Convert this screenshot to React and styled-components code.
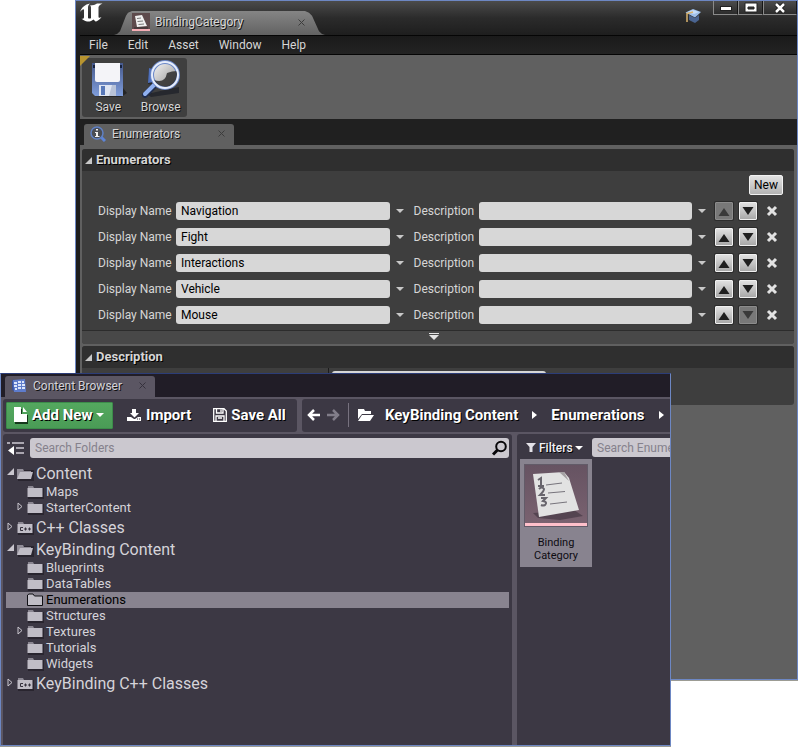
import React from 'react';
import styled, { createGlobalStyle, css } from 'styled-components';

const GlobalStyle = createGlobalStyle`
  *, *::before, *::after { box-sizing: border-box; }
  body {
    margin: 0;
    background: #ffffff;
    font-family: Roboto, "Liberation Sans", sans-serif;
    font-size: 12px;
    line-height: 16px;
  }
  button, input { font: inherit; color: inherit; }
  button { border: 0; padding: 0; background: none; }
  a { color: inherit; text-decoration: none; }
  svg { display: block; flex: none; }
  ul { list-style: none; margin: 0; padding: 0; }
  h2 { margin: 0; font-size: 13px; }
`;

const Desktop = styled.div`
  position: relative;
  min-height: 100vh;
  overflow: hidden;
`;

/* ---------- Editor window ---------- */

const EditorWindow = styled.section`
  display: flex;
  flex-direction: column;
  margin-left: 75px;
  min-height: calc(100vh - 67px);
  border: 1px solid #6d87c3;
  box-shadow: 0 1px 0 #9c9c94;
  padding-left: 4px;
  background: #1d1d1d;
  color: #d6d6d6;
`;

const TitleBar = styled.header`
  display: flex;
  align-items: flex-end;
  height: 34px;
  margin-left: -4px;
  padding-left: 4px;
  background: linear-gradient(#4b4b4b, #2b2b2b 50%, #1e1e1e);
`;

const LogoSlot = styled.div`
  align-self: flex-start;
  width: 34px;
  padding-top: 2px;
`;

const DocumentTab = styled.div`
  display: flex;
  align-items: center;
  gap: 5px;
  width: 211px;
  height: 24px;
  padding: 0 17px 2px 18px;
  background: linear-gradient(#858585, #626262);
  clip-path: polygon(
    0 100%, 3px 96%, 6px 84%, 12px 20%, 14px 7%, 18px 0,
    calc(100% - 20px) 0, calc(100% - 16px) 7%, calc(100% - 13px) 20%,
    calc(100% - 6px) 84%, calc(100% - 3px) 96%, 100% 100%
  );
  text-shadow: 1px 1px 0 #111111;
`;

const CloseButton = styled.button`
  display: flex;
  align-items: center;
  justify-content: center;
  width: 14px;
  height: 14px;
  margin-left: auto;
  color: ${(p) => p.$color || '#3c3c3c'};
`;

const TutorialButton = styled.button`
  align-self: flex-start;
  margin: 7px 11px 0 auto;
`;

const WindowControls = styled.div`
  display: flex;
  align-self: flex-start;
`;

const WindowButton = styled.button`
  display: flex;
  align-items: center;
  justify-content: center;
  width: ${(p) => (p.$wide ? 34 : 25)}px;
  height: 14px;
  border: 1px solid #8a8a8a;
  border-top: 0;
  border-right-color: #161616;
  background: linear-gradient(#4c4c4c, #2c2c2c);
`;

const MenuBar = styled.nav`
  display: flex;
  align-items: center;
  gap: 20px;
  height: 20px;
  padding-left: 9px;
  border: solid #050505;
  border-width: 1px 0;
  background: linear-gradient(#1a1a1a, #232323);
`;

const EditorBody = styled.div`
  display: flex;
  flex: 1;
  flex-direction: column;
  background: #606060;
`;

const EditorToolbar = styled.div`
  position: relative;
  padding: 3px 2px 2px;
  &::before {
    content: "";
    position: absolute;
    top: 1px;
    left: 0;
    width: 10px;
    height: 10px;
    background: #b8942f;
    clip-path: polygon(0 0, 100% 0, 0 100%);
  }
`;

const ToolGroup = styled.div`
  display: inline-flex;
  width: 105px;
  height: 59px;
  border-radius: 3px;
  background: #3f3f3f;
  vertical-align: top;
`;

const ToolButton = styled.button`
  display: flex;
  flex: 1;
  flex-direction: column;
  align-items: center;
  gap: 1px;
  padding-top: 2px;
  text-shadow: 1px 1px 0 #111111;
`;

const TabStrip = styled.div`
  display: flex;
  align-items: flex-end;
  height: ${(p) => (p.$purple ? 23 : 26)}px;
  padding-left: 4px;
  background: ${(p) => (p.$purple ? '#211d27' : '#202020')};
`;

const PanelTab = styled.div`
  display: flex;
  align-items: center;
  gap: 6px;
  width: 150px;
  height: 21px;
  padding: 0 6px 2px;
  border-radius: 3px 3px 0 0;
  background: ${(p) => (p.$purple ? '#5b5663' : '#606060')};
  text-shadow: 1px 1px 0 #111111;
`;

const Details = styled.div`
  display: flex;
  flex-direction: column;
  gap: 2px;
  padding: 4px 3px 0 2px;
`;

const Category = styled.section`
  overflow: hidden;
  border-radius: 3px;
  background: #3e3e3e;
`;

const CategoryHeader = styled.div`
  display: flex;
  align-items: center;
  gap: 4px;
  height: 22px;
  padding-left: 3px;
  background: #2f2f2f;
  text-shadow: 1px 1px 0 #000000;
`;

const CategoryTools = styled.div`
  display: flex;
  justify-content: flex-end;
  padding: 4px 11px 3px;
`;

const NewButton = styled.button`
  height: 20px;
  padding: 0 4px;
  border: 1px solid #f2f2f2;
  border-radius: 2px;
  background: linear-gradient(#e2e2e2, #b4b4b4);
  color: #000000;
`;

const EnumRow = styled.div`
  display: flex;
  align-items: center;
  height: 26px;
  padding: 0 16px;
`;

const Field = styled.label`
  display: flex;
  flex: 1 1 ${(p) => p.$basis}px;
  align-items: center;
  gap: 4px;
  min-width: 0;
  white-space: nowrap;
`;

const FieldName = styled.span`
  flex: none;
  width: ${(p) => p.$width}px;
`;

const TextBox = styled.input`
  flex: 1 1 0;
  min-width: 0;
  width: 100%;
  height: 18px;
  padding: 0 5px;
  border: 0;
  border-radius: 3px;
  background: #d7d7d7;
  color: #000000;
`;

const OptionsButton = styled.button`
  display: flex;
  justify-content: center;
  width: 20px;
  margin-right: ${(p) => (p.$last ? 3 : 4)}px;
`;

const MoveButton = styled.button`
  display: flex;
  align-items: center;
  justify-content: center;
  width: 18px;
  height: 18px;
  margin-right: 6px;
  border: 1px solid #efefef;
  border-radius: 1px;
  box-shadow: 0 0 0 1px #2c2c2c;
  background: linear-gradient(#e0e0e0, #a9a9a9);
  color: #1f1f1f;
  &:disabled {
    border-color: #8c8c8c;
    background: #787878;
    color: #3a3a3a;
  }
`;

const RemoveButton = styled.button`
  display: flex;
  width: 12px;
  margin-left: 3px;
`;

const AdvancedToggle = styled.button`
  display: flex;
  justify-content: center;
  width: 100%;
  height: 14px;
  margin-top: 2px;
  padding: 2px 8px 0 0;
  border-top: 1px solid #2c2c2c;
  background: #484848;
`;

const DescriptionRow = styled.div`
  display: grid;
  grid-template-columns: 247px 214px;
  gap: 3px;
  height: 37px;
  &::before {
    content: "";
    border-right: 1px solid #1c1c1c;
  }
`;

const DescriptionCell = styled.div`
  padding-top: 3px;
`;

/* ---------- Content browser window ---------- */

const BrowserWindow = styled.section`
  position: absolute;
  top: 373px;
  right: 127px;
  bottom: 1px;
  left: 0;
  display: flex;
  flex-direction: column;
  overflow: hidden;
  border: 1px solid #6d87c3;
  border-top-color: #2c3d78;
  box-shadow: 0 1px 0 #9c9c94;
  background: #5b5663;
  color: #d5d3d9;
`;

const BrowserToolbar = styled.div`
  display: flex;
  gap: 5px;
  padding: 2px 0 2px 2px;
  color: #ffffff;
  font-size: 15px;
  font-weight: 700;
  text-shadow: 1px 1px 0 #000000;
`;

const BarGroup = styled.div`
  display: flex;
  align-items: center;
  height: 33px;
  padding-bottom: 1px;
  border-radius: 3px;
  background: #3c3844;
  white-space: nowrap;
  ${(p) =>
    p.$grow
      ? css`
          flex: 1;
          padding-left: 5px;
          overflow: hidden;
          border-radius: 3px 0 0 3px;
        `
      : css`
          flex: none;
          width: 294px;
          padding-left: 3px;
        `}
`;

const BarButton = styled.button`
  display: flex;
  align-items: center;
  gap: 4px;
  margin-left: ${(p) => p.$gap || 0}px;
  text-shadow: inherit;
`;

const AddButton = styled(BarButton)`
  width: 107px;
  height: 27px;
  padding-left: 7px;
  border: 1px solid #3c8c4a;
  border-radius: 1px;
  background: linear-gradient(#54a85f, #4a9c56);
`;

const Separator = styled.span`
  width: 1px;
  height: 24px;
  margin: 0 9px 0 8px;
  background: #77727f;
`;

const Crumbs = styled.nav`
  display: flex;
  align-items: center;
  gap: 14px;
  margin-left: 10px;
`;

const Panels = styled.div`
  display: flex;
  flex: 1;
  gap: 5px;
  min-height: 0;
  padding-left: 2px;
`;

const SourcesPanel = styled.div`
  flex: 1;
  min-width: 0;
  padding: 4px 3px 0;
  border-radius: 3px 3px 0 0;
  background: #3c3844;
`;

const AssetPanel = styled.div`
  flex: none;
  width: 153px;
  padding: 4px 0 0 3px;
  border-radius: 3px 0 0 0;
  background: #3c3844;
`;

const SearchRow = styled.div`
  display: flex;
  align-items: center;
  gap: 5px;
  margin-bottom: ${(p) => p.$space || 0}px;
`;

const SearchBox = styled.div`
  display: flex;
  flex: 1;
  align-items: center;
  min-width: 0;
  height: ${(p) => p.$height}px;
  border-radius: 3px;
  background: #cbc8cf;
  ${(p) => p.$flush && 'border-radius: 3px 0 0 3px;'}
`;

const SearchInput = styled.input`
  flex: 1;
  min-width: 0;
  padding: 0 0 0 5px;
  border: 0;
  background: none;
  color: #222222;
  outline: 0;
  &::placeholder { color: #85818c; opacity: 1; }
`;

const SquareButton = styled.button`
  display: flex;
  justify-content: center;
  width: 19px;
`;

const TreeItem = styled.li`
  display: flex;
  align-items: center;
  height: ${(p) => (p.$root ? 22 : 16)}px;
  padding-left: ${(p) => (p.$root ? 0 : 10)}px;
  ${(p) => p.$root && 'padding-top: 2px;'}
  ${(p) => p.$selected && 'background: #88838f;'}
  color: ${(p) => (p.$selected ? '#000000' : '#d5d3d9')};
  font-size: ${(p) => (p.$root ? 16 : 13)}px;
`;

const TreeToggle = styled.button`
  display: flex;
  flex: none;
  width: 11px;
  height: 12px;
  padding-left: 1px;
  ${(p) => p.$hidden && 'visibility: hidden;'}
`;

const FolderButton = styled.button`
  display: flex;
  flex: 1;
  align-items: center;
  gap: 2px;
  line-height: 16px;
  text-align: left;
  white-space: nowrap;
`;

const FilterButton = styled.button`
  display: flex;
  align-items: center;
  gap: 2px;
  width: 67px;
  padding-left: 6px;
  color: #f2f1f4;
  font-weight: 500;
  text-shadow: 1px 1px 0 #000000;
`;

const AssetTile = styled.button`
  display: flex;
  flex-direction: column;
  align-items: center;
  width: 72px;
  height: 108px;
  margin-top: 2px;
  padding-top: 5px;
  background: #88838f;
  color: #0e0c12;
  font-size: 11px;
  line-height: 13px;
`;

const AssetName = styled.span`
  width: 60px;
  margin-top: 9px;
`;

/* ---------- Icons ---------- */

const EngineLogo = () => (
  <svg width="24" height="20" viewBox="0 0 24 20" aria-hidden="true">
    <path
      fill="#ffffff"
      d="M0 9C1.500 4.500 5 1.500 10 0.500C8.500 2 8 3 8 4.500V14.500C8 15.500 9 16 11 15.200V4.500C11 3.500 10.500 3 9.800 2.600C13 2.500 15.500 1.500 17 0.500H22.500C20.500 1.500 19 2.500 18.500 4V13.500C18.500 15 19.500 15.300 21.500 14C19.500 17 17 18.300 15.500 18.600L13.500 16.500C12 18 9.500 18.800 7 18.500C4.500 18 3 17 1.500 15.800C3 16 4 15.500 4 14V7C4 5.500 2 6.500 0 9Z"
    />
  </svg>
);

const PageArt = () => (
  <g>
    <path d="M9 49L50 46L59 52L36 56L14 54Z" fill="#3e323d" opacity="0.6" />
    <path d="M9 10L40 8L45 14L55 46L15 53Z" fill="#e2e2e2" />
    <path d="M35 8L40 8L45 17Z" fill="#a5a0a3" />
    <g stroke="#77747c" strokeWidth="1">
      <path d="M22 21L38 19M24 29L41 27.500M26 40L43 38" />
    </g>
    <g fill="none" stroke="#68656d" strokeWidth="2">
      <path d="M14 16L17 14V22M14 22H20" />
      <path d="M15 25Q18 22 20 25Q20 27 16 31H21" />
      <path d="M17 34H22L19 37Q24 38 21 41Q19 42 17 41" />
    </g>
  </g>
);

const AssetThumb = () => (
  <svg width="64" height="63" viewBox="0 0 64 63" aria-hidden="true">
    <defs>
      <linearGradient id="thumb" x1="0" y1="0" x2="0" y2="1">
        <stop offset="0" stopColor="#665362" />
        <stop offset="1" stopColor="#7a6270" />
      </linearGradient>
    </defs>
    <rect width="64" height="63" fill="#625b68" />
    <rect x="1" y="1" width="62" height="60" fill="url(#thumb)" />
    <PageArt />
    <rect x="1" y="59" width="62" height="3" fill="#ffc0cb" />
  </svg>
);

const TabAssetIcon = () => (
  <svg width="18" height="18" viewBox="0 0 18 18" aria-hidden="true">
    <rect width="18" height="18" fill="#5d4a4c" />
    <path d="M3 3L10 2L15 13L5 14Z" fill="#efefef" />
    <path d="M5 5.500L9 5M5.500 8.500L11 8M6.500 11.500L12 11" stroke="#777777" />
    <path d="M2 15H16" stroke="#332a2c" />
    <rect y="16" width="18" height="2" fill="#f5adb5" />
  </svg>
);

const CrossIcon = () => (
  <svg width="7" height="7" viewBox="0 0 7 7" aria-hidden="true">
    <path d="M0.500 0.500L6.500 6.500M6.500 0.500L0.500 6.500" stroke="currentColor" strokeWidth="1" />
  </svg>
);

const CapIcon = () => (
  <svg width="17" height="16" viewBox="0 0 17 16" aria-hidden="true">
    <path d="M4 7L10 10L14 7V12L10 15L4 12Z" fill="#4a6490" />
    <path d="M0.500 4.500L8 1L16 4L10 9.500Z" fill="#9fc0ea" />
    <path d="M3 4L8 2L14 4L9 6Z" fill="#c7ddf7" />
    <path d="M8 4L2 5.500V14" fill="none" stroke="#d9b26e" strokeWidth="1.500" />
  </svg>
);

const MinimizeIcon = () => (
  <svg width="12" height="6" viewBox="0 0 12 6" aria-hidden="true">
    <rect x="0.500" y="1.500" width="11" height="4" fill="#ffffff" stroke="#222222" />
  </svg>
);

const RestoreIcon = () => (
  <svg width="14" height="11" viewBox="0 0 14 11" aria-hidden="true">
    <path d="M1 1H13V10H1ZM4 5V7H10V5Z" fill="#ffffff" fillRule="evenodd" stroke="#222222" />
  </svg>
);

const WindowCloseIcon = () => (
  <svg width="12" height="12" viewBox="0 0 12 12" aria-hidden="true">
    <path d="M2 2L10 10M10 2L2 10" stroke="#111111" strokeWidth="4" />
    <path d="M2 2L10 10M10 2L2 10" stroke="#ffffff" strokeWidth="2.500" />
  </svg>
);

const FloppyIcon = () => (
  <svg width="38" height="38" viewBox="0 0 38 38" aria-hidden="true">
    <defs>
      <linearGradient id="disk" x1="0" y1="0" x2="0" y2="1">
        <stop offset="0" stopColor="#46598c" />
        <stop offset="1" stopColor="#7f9ddb" />
      </linearGradient>
    </defs>
    <path d="M5 37H32L38 33L34 28V34Z" fill="#1f1f1f" opacity="0.8" />
    <path d="M3 3H34V36H6L3 33Z" fill="url(#disk)" />
    <path d="M6 3H31V20Q31 22 29 22H8Q6 22 6 20Z" fill="#f4f4f8" />
    <path d="M4 5H6V8H4ZM31 5H33V8H31Z" fill="#16223f" />
    <path d="M10 25H27V36H10Z" fill="#dfe5f2" />
    <path d="M12 26H16V35H12Z" fill="#5878b8" />
    <path d="M23 25H27V36H20Z" fill="#b9c3d8" />
  </svg>
);

const BrowseIcon = () => (
  <svg width="40" height="38" viewBox="0 0 40 38" aria-hidden="true">
    <defs>
      <linearGradient id="lens" x1="0" y1="0" x2="1" y2="1">
        <stop offset="0" stopColor="#fafafa" />
        <stop offset="1" stopColor="#8b8b8b" />
      </linearGradient>
    </defs>
    <path d="M8 8H12V25L7 24ZM33 28L38 27V33L10 37L6 34Z" fill="#26282e" />
    <path d="M8 8L12 9V22L7 23Z" fill="#4f70bb" />
    <path d="M13 26L4 35" stroke="#1f2c4c" strokeWidth="6" strokeLinecap="round" />
    <path d="M13 25L4 34" stroke="#8fb0f0" strokeWidth="4" strokeLinecap="round" />
    <circle cx="24" cy="15" r="13" fill="url(#lens)" stroke="#6b88c8" strokeWidth="4" />
    <path d="M13 20Q24 24 26 13Q31 11 36 11Q37 23 26 27Q17 27 13 20Z" fill="#2e2e2e" opacity="0.85" />
    <circle cx="24" cy="15" r="13" fill="none" stroke="#e6edfb" strokeWidth="2" />
  </svg>
);

const InfoIcon = () => (
  <svg width="16" height="16" viewBox="0 0 16 16" aria-hidden="true">
    <path d="M11 11L15 15" stroke="#5d84d6" strokeWidth="3" />
    <circle cx="7" cy="7" r="6" fill="#4a4d55" stroke="#5f80c4" strokeWidth="1.500" />
    <path d="M6 3H8V4.500H6ZM5 6H8V10H9.500V11H5V10H6V7H5Z" fill="#f0f0f0" />
  </svg>
);

const OpenTriangle = ({ color = '#c8c8c8' }) => (
  <svg width="7" height="7" viewBox="0 0 7 7" aria-hidden="true">
    <path d="M7 0V7H0Z" fill={color} />
  </svg>
);

const ClosedTriangle = () => (
  <svg width="6" height="9" viewBox="0 0 6 9" aria-hidden="true">
    <path d="M1 1L5 4.500L1 8Z" fill="none" stroke="#c9c6ce" />
  </svg>
);

const DownArrow = ({ color = '#c8c8c8' }) => (
  <svg width="8" height="4" viewBox="0 0 8 4" aria-hidden="true">
    <path d="M0 0H8L4 4Z" fill={color} />
  </svg>
);

const MoveIcon = ({ down }) => (
  <svg width="12" height="14" viewBox="0 0 12 14" aria-hidden="true">
    <path d={down ? 'M0.500 3H11.500L6 11Z' : 'M0.500 12H11.500L6 4Z'} fill="currentColor" />
  </svg>
);

const RemoveIcon = () => (
  <svg width="12" height="12" viewBox="0 0 12 12" aria-hidden="true">
    <path d="M2 2L10 10M10 2L2 10" stroke="#e2e2e2" strokeWidth="3" />
  </svg>
);

const ExpandIcon = () => (
  <svg width="10" height="8" viewBox="0 0 10 8" aria-hidden="true">
    <path d="M0 0H10V1H0ZM0 2H10L5 7Z" fill="#e4e4e4" />
  </svg>
);

const BrowserTabIcon = () => (
  <svg width="16" height="16" viewBox="0 0 16 16" aria-hidden="true">
    <path d="M1 3L3 1V13L1 12Z" fill="#39529c" />
    <path d="M2 2L14 1L15 14L3 14Z" fill="#5e7ccc" />
    <path d="M3 4H6V6H3ZM7 3H10V5H7ZM11 3H13V5H11ZM3 7H6V9H3ZM7 6H10V8H7ZM11 6H14V8H11ZM4 10H6V12H4ZM7 9H10V11H7ZM11 9H14V11H11Z" fill="#dce5fb" />
  </svg>
);

const NewFileIcon = () => (
  <svg width="14" height="17" viewBox="0 0 14 17" aria-hidden="true">
    <path d="M1 2H8V8H14V17H1Z" fill="#16381c" />
    <path d="M0 0H7V7H13V15H0ZM9 0L13 5H9Z" fill="#ffffff" />
  </svg>
);

const ImportIcon = () => (
  <svg width="15" height="14" viewBox="0 0 15 14" aria-hidden="true">
    <path d="M5 1H9V5H12L7.500 9.500L3 5H5ZM0 9H4L7 11H8L11 9H14V13H0Z" fill="#ffffff" />
    <path d="M10 11H11M12 11H13" stroke="#3c3844" />
  </svg>
);

const SaveAllIcon = () => (
  <svg width="14" height="14" viewBox="0 0 14 14" fill="none" stroke="#ffffff" strokeWidth="1.300" aria-hidden="true">
    <path d="M0.700 0.700H11L13.300 3V13.300H0.700ZM3.500 0.700V5H10V0.700M8 1.500V4M3 13V8H11V13M5 10H9" />
  </svg>
);

const ArrowIcon = ({ forward, color }) => (
  <svg width="13" height="12" viewBox="0 0 13 12" fill="none" stroke={color} strokeWidth="2.500" aria-hidden="true">
    <path d={forward ? 'M0 6H11M6 1L11 6L6 11' : 'M13 6H2M7 1L2 6L7 11'} />
  </svg>
);

const OpenFolderIcon = () => (
  <svg width="17" height="14" viewBox="0 0 17 14" aria-hidden="true">
    <path d="M0 1H6L7 3H13V6H4L0 11ZM4 7H16L12 13H0Z" fill="#ffffff" />
  </svg>
);

const CrumbArrow = () => (
  <svg width="5" height="8" viewBox="0 0 5 8" aria-hidden="true">
    <path d="M0 0L5 4L0 8Z" fill="#ffffff" />
  </svg>
);

const SourcesIcon = () => (
  <svg width="17" height="15" viewBox="0 0 17 15" aria-hidden="true">
    <path d="M0 1H3V3H0ZM5 1H17V3H5ZM9 6H17V8H9ZM9 11H17V13H9Z" fill="#aaa6b0" />
    <path d="M7 5V14L1 9.500Z" fill="#ffffff" />
  </svg>
);

const SearchIcon = () => (
  <svg width="16" height="16" viewBox="0 0 16 16" fill="none" stroke="#08070a" aria-hidden="true">
    <circle cx="9" cy="6.500" r="4.800" strokeWidth="2" />
    <path d="M5.500 10L1 14.500" strokeWidth="3" />
  </svg>
);

const FunnelIcon = () => (
  <svg width="11" height="10" viewBox="0 0 11 10" aria-hidden="true">
    <path d="M0 0H10L6.500 4V9H3.500V4Z" fill="#e4e2e8" />
  </svg>
);

const FolderIcon = ({ kind, selected }) => (
  <svg width="17" height="14" viewBox="0 0 17 14" aria-hidden="true">
    <path d="M1 3H17V14H1Z" fill="#211e27" opacity={selected ? 0 : 0.7} />
    {kind === 'open' ? (
      <>
        <path d="M0 2H6L7 4H14V12H0Z" fill="#918d98" />
        <path d="M3 5H16L14 12H0Z" fill="#c0bdc6" />
      </>
    ) : (
      <>
        <path d="M1 1H6L7 3H1Z" fill="#8a8691" />
        <path d="M0.500 3H15.500V12H0.500Z" fill="#c0bdc6" />
      </>
    )}
    {kind === 'cpp' && (
      <path
        d="M6 6.500H3.500V9.500H6M7 8H10M8.500 6.500V9.500M11 8H14M12.500 6.500V9.500"
        fill="none"
        stroke="#35313c"
      />
    )}
    {selected && <path d="M0.500 12.500V2L2 1H6L7.500 3H15.500V12.500Z" fill="#c0bdc6" stroke="#111015" />}
  </svg>
);

/* ---------- Data ---------- */

const MENUS = ['File', 'Edit', 'Asset', 'Window', 'Help'];
const ENUMERATORS = ['Navigation', 'Fight', 'Interactions', 'Vehicle', 'Mouse'];
const FOLDERS = [
  { name: 'Content', root: true, kind: 'open', toggle: 'open' },
  { name: 'Maps' },
  { name: 'StarterContent', toggle: 'closed' },
  { name: 'C++ Classes', root: true, kind: 'cpp', toggle: 'closed' },
  { name: 'KeyBinding Content', root: true, kind: 'open', toggle: 'open' },
  { name: 'Blueprints' },
  { name: 'DataTables' },
  { name: 'Enumerations', selected: true },
  { name: 'Structures' },
  { name: 'Textures', toggle: 'closed' },
  { name: 'Tutorials' },
  { name: 'Widgets' },
  { name: 'KeyBinding C++ Classes', root: true, kind: 'cpp', toggle: 'closed' },
];

function EnumeratorRow({ name, first, last }) {
  return (
    <EnumRow>
      <Field $basis={78}>
        <FieldName $width={74}>Display Name</FieldName>
        <TextBox type="text" defaultValue={name} />
      </Field>
      <OptionsButton aria-label="Name options"><DownArrow /></OptionsButton>
      <Field $basis={65}>
        <FieldName $width={61}>Description</FieldName>
        <TextBox type="text" />
      </Field>
      <OptionsButton $last aria-label="Description options"><DownArrow /></OptionsButton>
      <MoveButton disabled={first} aria-label="Move up"><MoveIcon /></MoveButton>
      <MoveButton disabled={last} aria-label="Move down"><MoveIcon down /></MoveButton>
      <RemoveButton aria-label="Remove"><RemoveIcon /></RemoveButton>
    </EnumRow>
  );
}

function EnumEditor() {
  return (
    <EditorWindow aria-label="BindingCategory">
      <TitleBar>
        <LogoSlot><EngineLogo /></LogoSlot>
        <DocumentTab>
          <TabAssetIcon />
          <span>BindingCategory</span>
          <CloseButton aria-label="Close tab"><CrossIcon /></CloseButton>
        </DocumentTab>
        <TutorialButton aria-label="Tutorials"><CapIcon /></TutorialButton>
        <WindowControls>
          <WindowButton aria-label="Minimize"><MinimizeIcon /></WindowButton>
          <WindowButton aria-label="Restore"><RestoreIcon /></WindowButton>
          <WindowButton $wide aria-label="Close"><WindowCloseIcon /></WindowButton>
        </WindowControls>
      </TitleBar>
      <MenuBar>
        {MENUS.map((menu) => <button key={menu}>{menu}</button>)}
      </MenuBar>
      <EditorBody>
        <EditorToolbar>
          <ToolGroup>
            <ToolButton><FloppyIcon />Save</ToolButton>
            <ToolButton><BrowseIcon />Browse</ToolButton>
          </ToolGroup>
        </EditorToolbar>
        <TabStrip>
          <PanelTab>
            <InfoIcon />
            <span>Enumerators</span>
            <CloseButton aria-label="Close panel"><CrossIcon /></CloseButton>
          </PanelTab>
        </TabStrip>
        <Details>
          <Category>
            <CategoryHeader><OpenTriangle /><h2>Enumerators</h2></CategoryHeader>
            <CategoryTools><NewButton>New</NewButton></CategoryTools>
            {ENUMERATORS.map((name, i) => (
              <EnumeratorRow key={name} name={name} first={i === 0} last={i === ENUMERATORS.length - 1} />
            ))}
            <AdvancedToggle aria-label="Show advanced"><ExpandIcon /></AdvancedToggle>
          </Category>
          <Category>
            <CategoryHeader><OpenTriangle /><h2>Description</h2></CategoryHeader>
            <DescriptionRow>
              <DescriptionCell><TextBox type="text" aria-label="Enum description" /></DescriptionCell>
            </DescriptionRow>
          </Category>
        </Details>
      </EditorBody>
    </EditorWindow>
  );
}

function FolderTree() {
  return (
    <ul>
      {FOLDERS.map(({ name, root, kind, toggle, selected }) => (
        <TreeItem key={name} $root={root} $selected={selected}>
          <TreeToggle $hidden={!toggle} aria-label={`Toggle ${name}`}>
            {toggle === 'closed' ? <ClosedTriangle /> : <OpenTriangle color="#c9c6ce" />}
          </TreeToggle>
          <FolderButton>
            <FolderIcon kind={kind} selected={selected} />
            {name}
          </FolderButton>
        </TreeItem>
      ))}
    </ul>
  );
}

function ContentBrowser() {
  return (
    <BrowserWindow aria-label="Content Browser">
      <TabStrip $purple>
        <PanelTab $purple>
          <BrowserTabIcon />
          <span>Content Browser</span>
          <CloseButton $color="#35313c" aria-label="Close panel"><CrossIcon /></CloseButton>
        </PanelTab>
      </TabStrip>
      <BrowserToolbar>
        <BarGroup>
          <AddButton><NewFileIcon />Add New<DownArrow color="#ffffff" /></AddButton>
          <BarButton $gap={14}><ImportIcon />Import</BarButton>
          <BarButton $gap={22}><SaveAllIcon />Save All</BarButton>
        </BarGroup>
        <BarGroup $grow>
          <BarButton aria-label="Back"><ArrowIcon color="#ffffff" /></BarButton>
          <BarButton $gap={7} aria-label="Forward"><ArrowIcon forward color="#817d89" /></BarButton>
          <Separator />
          <BarButton aria-label="Choose path"><OpenFolderIcon /></BarButton>
          <Crumbs>
            <a href="#content">KeyBinding Content</a>
            <CrumbArrow />
            <a href="#enumerations">Enumerations</a>
            <CrumbArrow />
          </Crumbs>
        </BarGroup>
      </BrowserToolbar>
      <Panels>
        <SourcesPanel>
          <SearchRow $space={4}>
            <SquareButton aria-label="Toggle sources"><SourcesIcon /></SquareButton>
            <SearchBox $height={20}>
              <SearchInput type="text" aria-label="Search folders" placeholder="Search Folders" />
              <SquareButton aria-label="Search"><SearchIcon /></SquareButton>
            </SearchBox>
          </SearchRow>
          <FolderTree />
        </SourcesPanel>
        <AssetPanel>
          <SearchRow>
            <FilterButton><FunnelIcon />Filters<DownArrow color="#ffffff" /></FilterButton>
            <SearchBox $height={19} $flush>
              <SearchInput type="text" aria-label="Search assets" placeholder="Search Enumerations" />
            </SearchBox>
          </SearchRow>
          <AssetTile>
            <AssetThumb />
            <AssetName>Binding Category</AssetName>
          </AssetTile>
        </AssetPanel>
      </Panels>
    </BrowserWindow>
  );
}

export default function App() {
  return (
    <>
      <GlobalStyle />
      <Desktop>
        <EnumEditor />
        <ContentBrowser />
      </Desktop>
    </>
  );
}
